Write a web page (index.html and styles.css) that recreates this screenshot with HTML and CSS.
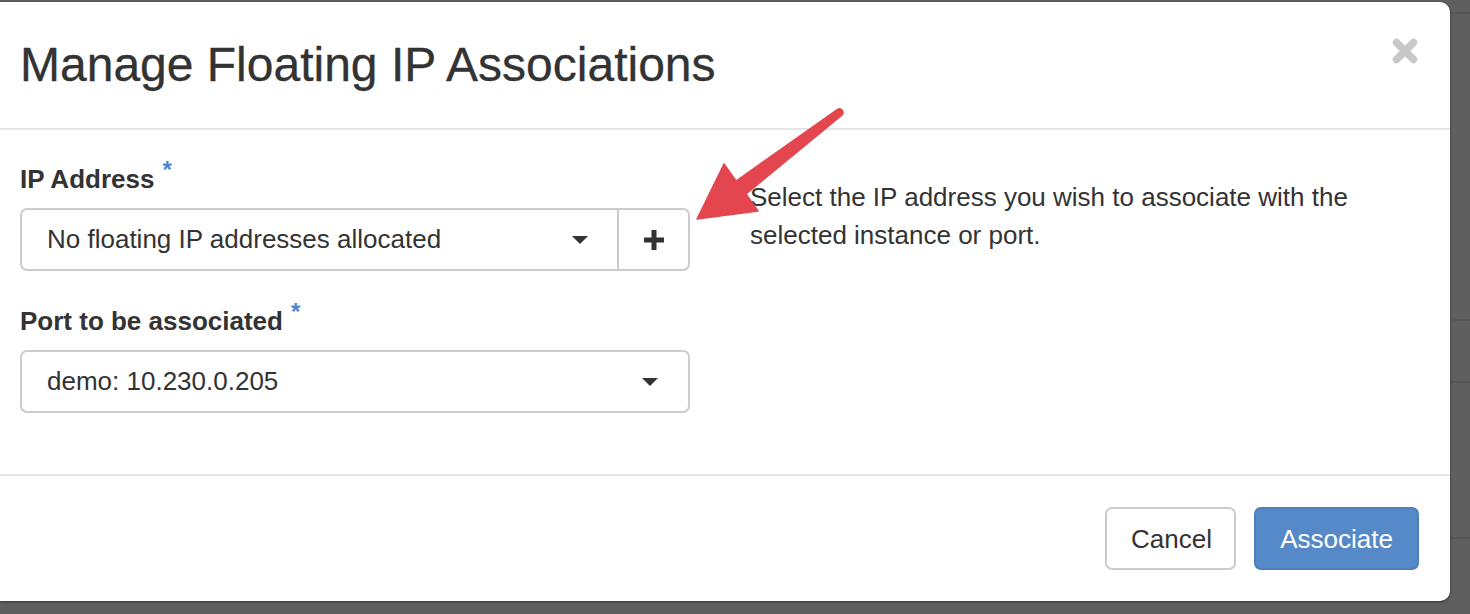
FILE: index.html
```html
<!DOCTYPE html>
<html>
<head>
<meta charset="utf-8">
<link rel="stylesheet" href="styles.css">
</head>
<body>
<div class="modal">
  <div class="modal-header">
    <h1 class="modal-title">Manage Floating IP Associations</h1>
    <button class="close" aria-label="Close">
      <svg width="26" height="26" viewBox="0 0 26 26"><path d="M4.5 4.5 L21.5 21.5 M21.5 4.5 L4.5 21.5" stroke="#c8c8c8" stroke-width="7.5" stroke-linecap="round"/></svg>
    </button>
  </div>
  <div class="modal-body">
    <div class="form-col">
      <div class="form-group">
        <label class="label">IP Address<span class="req">*</span></label>
        <div class="input-group">
          <div class="select">
            <span>No floating IP addresses allocated</span>
            <span class="caret"></span>
          </div>
          <button class="addon">
            <svg width="20" height="20" viewBox="0 0 20 20"><path d="M7.5 0 H12.5 V7.5 H20 V12.5 H12.5 V20 H7.5 V12.5 H0 V7.5 H7.5 Z" fill="#333" /></svg>
          </button>
        </div>
      </div>
      <div class="form-group">
        <label class="label">Port to be associated<span class="req">*</span></label>
        <div class="select single">
          <span>demo: 10.230.0.205</span>
          <span class="caret"></span>
        </div>
      </div>
    </div>
    <div class="help-col">
      <p>Select the IP address you wish to associate with the selected instance or port.</p>
    </div>
  </div>
  <div class="modal-footer">
    <button class="btn btn-default">Cancel</button>
    <button class="btn btn-primary">Associate</button>
  </div>
  <svg class="arrow" width="1470" height="614" viewBox="0 0 1470 614">
    <path d="M697 219 L724 164 L736 181 L837.9 109.2 A3.6 3.6 0 0 1 842.1 114.8 L746 194 L758 211 Z" fill="#e3464e" stroke="#e3464e" stroke-width="1.5" stroke-linejoin="round"/>
  </svg>
</div>
</body>
</html>
```

FILE: styles.css
```css
* { box-sizing: border-box; }
html, body { margin: 0; padding: 0; }
body {
  width: 1470px;
  height: 614px;
  overflow: hidden;
  background-color: #5f5f5f;
  background-image:
    linear-gradient(#555, #555),
    linear-gradient(#565656, #565656),
    linear-gradient(#565656, #565656),
    linear-gradient(#565656, #565656);
  background-size: 100% 2px, 100% 2px, 100% 2px, 100% 2px;
  background-position: 0 12px, 0 319px, 0 381px, 0 537px;
  background-repeat: no-repeat;
  font-family: "Liberation Sans", Arial, Helvetica, sans-serif;
  color: #333;
  padding-top: 2px;
}
.modal {
  position: relative;
  width: 1450px;
  height: 599px;
  background: #fff;
  border-radius: 0 10px 10px 0;
  box-shadow: 0 1px 3px rgba(0,0,0,0.45);
  display: flex;
  flex-direction: column;
}
.modal-header {
  height: 128px;
  border-bottom: 2px solid #e5e5e5;
  display: flex;
  align-items: center;
  justify-content: space-between;
  padding: 0 32px 0 20px;
}
.modal-title {
  margin: 0;
  font-size: 48px;
  font-weight: normal;
  line-height: 1.15;
  color: #333;
  -webkit-text-stroke: 0.3px #333;
}
.close {
  align-self: flex-start;
  margin-top: 36px;
  background: none;
  border: 0;
  padding: 0;
  width: 26px;
  height: 26px;
  display: block;
}
.close svg { display: block; }
.modal-body {
  height: 346px;
  border-bottom: 2px solid #e5e5e5;
  padding: 31px 20px 0 20px;
  display: flex;
  gap: 60px;
}
.form-col { width: 670px; flex: none; }
.form-group { margin-bottom: 10px; }
.form-group + .form-group { margin-top: 32px; }
.label {
  display: block;
  font-size: 26px;
  font-weight: bold;
  line-height: 37px;
  margin-bottom: 10px;
  color: #333;
}
.req {
  color: #4a87c9;
  font-size: 24px;
  font-weight: bold;
  margin-left: 8px;
  vertical-align: 10px;
  line-height: 0;
}
.input-group {
  display: flex;
  height: 63px;
}
.select {
  flex: 1;
  height: 63px;
  border: 2px solid #ccc;
  border-radius: 7px 0 0 7px;
  display: flex;
  align-items: center;
  justify-content: space-between;
  padding: 0 29px 0 25px;
  font-size: 26px;
  color: #333;
}
.select.single { border-radius: 7px; padding-right: 30px; }
.caret {
  width: 0;
  height: 0;
  border-left: 8px solid transparent;
  border-right: 8px solid transparent;
  border-top: 8px solid #333;
  margin-top: 1px;
}
.addon {
  width: 71px;
  height: 63px;
  border: 2px solid #ccc;
  border-left: 0;
  border-radius: 0 7px 7px 0;
  background: #fff;
  display: flex;
  align-items: center;
  justify-content: center;
  padding: 0;
}
.addon svg { display: block; }
.help-col { flex: 1; }
.help-col p {
  margin: 17px 0 0 0;
  font-size: 26px;
  line-height: 38px;
  width: 640px;
  color: #333;
}
.modal-footer {
  flex: 1;
  display: flex;
  justify-content: flex-end;
  align-items: center;
  gap: 18px;
  padding: 0 31px;
}
.btn {
  height: 63px;
  font-family: "Liberation Sans", Arial, Helvetica, sans-serif;
  font-size: 26px;
  border-radius: 7px;
  border: 2px solid #ccc;
  padding: 0 24px;
  line-height: 1;
}
.btn-default { background: #fff; color: #333; width: 131px; }
.btn-primary { background: #5589c7; border-color: #4c7fbd; color: #fff; width: 165px; }
.arrow {
  position: absolute;
  left: 0;
  top: -2px;
  pointer-events: none;
}
```
